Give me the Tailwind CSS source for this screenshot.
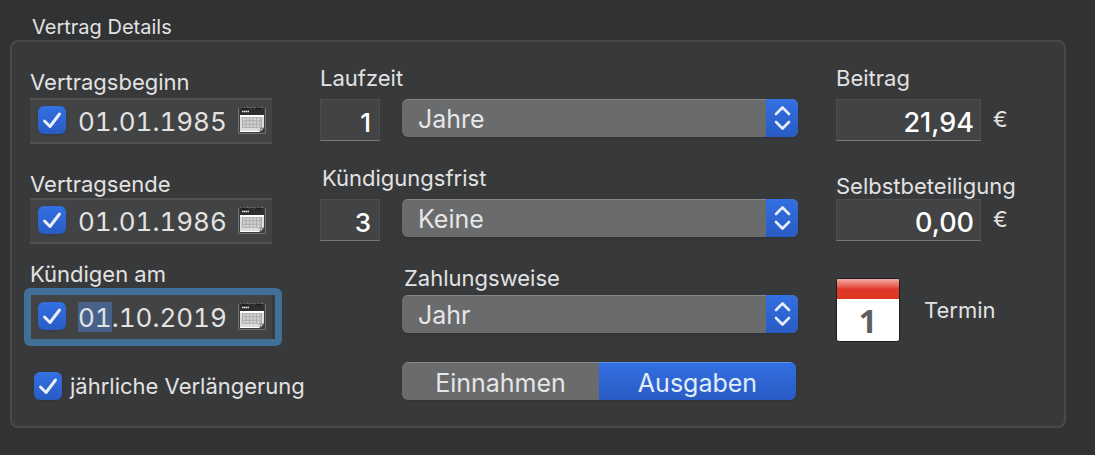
<!DOCTYPE html>
<html lang="de">
<head>
  <meta charset="UTF-8" />
  <meta name="viewport" content="width=device-width, initial-scale=1.0"/>
  <title>Vertrag Details</title>
  <script src="https://cdn.jsdelivr.net/npm/@tailwindcss/browser@4"></script>
</head>
<body class="min-h-screen bg-[#313234] font-['Inter','Liberation_Sans',sans-serif] text-[#e2e2e2]">

  <!-- shared icons -->
  <svg class="hidden">
    <symbol id="check" viewBox="0 0 28 28">
      <path d="M6.5 15 L12 20.5 L21.5 8" fill="none" stroke="#e8effb" stroke-width="3" stroke-linecap="round" stroke-linejoin="round"/>
    </symbol>
    <symbol id="updown" viewBox="0 0 32 38">
      <path d="M10 15 L16.5 8.500 L23 15 M10 23 L16.5 29.500 L23 23" fill="none" stroke="#e8effb" stroke-width="2.6" stroke-linecap="round" stroke-linejoin="round"/>
    </symbol>
    <symbol id="calendar" viewBox="0 0 28 30">
      <path d="M0.500 3 V28.500 H27.500 V3" fill="#3f4042" stroke="#6f7072" stroke-width="1"/>
      <rect x="2" y="2" width="24" height="8" fill="#2d2e30"/>
      <path d="M2 2.500 H26" stroke="#5b5c5e"/>
      <path d="M2 10 H26 V23 L22 27 H2 Z" fill="#dcdcdc"/>
      <path d="M2 10 H26 V12 H2 Z" fill="#ffffff"/>
      <path d="M2 26.500 H22" stroke="#ffffff"/>
      <rect x="4" y="12" width="20" height="11" fill="#acacac"/>
      <path d="M5 14 H23 M5 17.500 H23 M5 21 H23" stroke="#d2d2d2" stroke-width="2.500" stroke-dasharray="2.500 1"/>
      <path d="M22 27 L22.500 23.500 L26 23 Z" fill="#ffffff" stroke="#4c4c4c" stroke-width="0.800"/>
      <path d="M4 6.500 H11" stroke="#e8e8e8" stroke-width="1.300" stroke-dasharray="1.500 0.400"/>
      <path d="M5.500 4.500 V1 M8.500 4.500 V1 M19.500 4.500 V1 M22.500 4.500 V1" stroke="#18181a" stroke-width="2"/>
      <path d="M6 3 V1 M9 3 V1 M20 3 V1 M23 3 V1" stroke="#8a8b8d" stroke-width="1"/>
    </symbol>
  </svg>

  <fieldset aria-labelledby="title" class="pt-[15px] pr-[29px] pl-[10px]">
    <h1 id="title" class="pb-px pl-[22px] text-[20px] leading-6">Vertrag Details</h1>

    <div class="flex rounded-lg border-2 border-[#48494b] bg-[#38393b] pr-[45px] pb-[26px] pl-[18px] text-[22px] leading-6">

      <!-- dates -->
      <div class="w-[290px] shrink-0 pt-7">
        <label for="begin" class="block">Vertragsbeginn</label>
        <div class="mt-1 flex h-[46px] w-[242px] items-center border-y-2 border-[#515254] bg-[#424345] pr-[6px] pb-0.5 pl-2">
          <span class="relative size-7 shrink-0">
            <input type="checkbox" checked aria-label="Vertragsbeginn aktiv" class="block size-7 appearance-none rounded-md bg-linear-to-b from-[#3370e2] to-[#295bc3] shadow-sm">
            <svg class="pointer-events-none absolute inset-0 size-7"><use href="#check"/></svg>
          </span>
          <input id="begin" type="text" value="01.01.1985" class="ml-3 h-8 w-0 min-w-0 flex-1 bg-transparent pt-0.5 text-[26px] tabular-nums outline-none">
          <button type="button" aria-label="Kalender öffnen"><svg class="h-[30px] w-7"><use href="#calendar"/></svg></button>
        </div>

        <label for="end" class="mt-7 block">Vertragsende</label>
        <div class="mt-0.5 flex h-[46px] w-[242px] items-center border-y-2 border-[#515254] bg-[#424345] pr-[6px] pb-0.5 pl-2">
          <span class="relative size-7 shrink-0">
            <input type="checkbox" checked aria-label="Vertragsende aktiv" class="block size-7 appearance-none rounded-md bg-linear-to-b from-[#3370e2] to-[#295bc3] shadow-sm">
            <svg class="pointer-events-none absolute inset-0 size-7"><use href="#check"/></svg>
          </span>
          <input id="end" type="text" value="01.01.1986" class="ml-3 h-8 w-0 min-w-0 flex-1 bg-transparent pt-0.5 text-[26px] tabular-nums outline-none">
          <button type="button" aria-label="Kalender öffnen"><svg class="h-[30px] w-7"><use href="#calendar"/></svg></button>
        </div>

        <label for="cancel" class="mt-[18px] block">Kündigen am</label>
        <div class="-ml-[6px] mt-0.5 w-[258px] rounded-md border-[7px] border-[#426f98]">
          <div class="flex h-[44px] w-[241px] items-center bg-[#424345] pr-[6px] pb-0.5 pl-[7px]">
            <span class="relative size-7 shrink-0">
              <input type="checkbox" checked aria-label="Kündigen am aktiv" class="block size-7 appearance-none rounded-md bg-linear-to-b from-[#3370e2] to-[#295bc3] shadow-sm">
              <svg class="pointer-events-none absolute inset-0 size-7"><use href="#check"/></svg>
            </span>
            <input id="cancel" type="text" value="01.10.2019" class="ml-3 h-8 w-0 min-w-0 flex-1 bg-transparent pt-0.5 text-[26px] tabular-nums outline-none selection:bg-[#46628a] selection:text-[#e2e2e2]">
            <button type="button" aria-label="Kalender öffnen"><svg class="h-[30px] w-7"><use href="#calendar"/></svg></button>
          </div>
        </div>

        <div class="mt-[26px] flex items-center gap-2 pl-1">
          <span class="relative size-7 shrink-0">
            <input id="renew" type="checkbox" checked class="block size-7 appearance-none rounded-md bg-linear-to-b from-[#3370e2] to-[#295bc3] shadow-sm">
            <svg class="pointer-events-none absolute inset-0 size-7"><use href="#check"/></svg>
          </span>
          <label for="renew" class="whitespace-nowrap">jährliche Verlängerung</label>
        </div>
      </div>

      <!-- term and payment -->
      <div class="min-w-0 flex-1 pt-6">
        <label for="term" class="block">Laufzeit</label>
        <div class="mt-[9px] flex h-[42px] items-start gap-[22px]">
          <input id="term" type="text" value="1" class="h-[42px] w-[60px] border border-[#4c4d4f] border-b-[#77787a] bg-[#424345] pt-1 pr-2 text-right text-[26px] font-medium text-white outline-none">
          <div class="relative flex-1">
            <select aria-label="Einheit der Laufzeit" class="block h-[38px] w-full appearance-none rounded-md border-t border-[#858688] bg-[#6a6b6d] pl-4 text-[25px] leading-8 text-[#e6e6e6] shadow-sm">
              <option>Jahre</option>
              <option>Monate</option>
            </select>
            <svg class="pointer-events-none absolute top-0 right-0 h-[38px] w-8 rounded-r-md bg-linear-to-b from-[#3370e2] to-[#295bc3]"><use href="#updown"/></svg>
          </div>
        </div>

        <label for="notice" class="mt-[25px] block pl-0.5">Kündigungsfrist</label>
        <div class="mt-[9px] flex h-[42px] items-start gap-[22px]">
          <input id="notice" type="text" value="3" class="h-[42px] w-[60px] border border-[#4c4d4f] border-b-[#77787a] bg-[#424345] pt-1 pr-2 text-right text-[26px] font-medium text-white outline-none">
          <div class="relative flex-1">
            <select aria-label="Einheit der Kündigungsfrist" class="block h-[38px] w-full appearance-none rounded-md border-t border-[#858688] bg-[#6a6b6d] pl-4 text-[25px] leading-8 text-[#e6e6e6] shadow-sm">
              <option>Keine</option>
              <option>Monate</option>
            </select>
            <svg class="pointer-events-none absolute top-0 right-0 h-[38px] w-8 rounded-r-md bg-linear-to-b from-[#3370e2] to-[#295bc3]"><use href="#updown"/></svg>
          </div>
        </div>

        <div class="pt-[25px] pl-[82px]">
          <label for="payment" class="block pl-0.5">Zahlungsweise</label>
          <div class="relative mt-[5px]">
            <select id="payment" class="block h-[38px] w-full appearance-none rounded-md border-t border-[#858688] bg-[#6a6b6d] pl-4 text-[25px] leading-8 text-[#e6e6e6] shadow-sm">
              <option>Jahr</option>
              <option>Monat</option>
            </select>
            <svg class="pointer-events-none absolute top-0 right-0 h-[38px] w-8 rounded-r-md bg-linear-to-b from-[#3370e2] to-[#295bc3]"><use href="#updown"/></svg>
          </div>
          <div class="mt-[29px] mr-0.5 flex h-[38px] overflow-hidden rounded-md text-[25px] leading-8 shadow-sm">
            <button type="button" class="flex-1 border-t border-[#858688] bg-[#6a6b6d] pt-0.5 text-[#e6e6e6]">Einnahmen</button>
            <button type="button" aria-pressed="true" class="flex-1 border-t border-[#5c90ee] bg-linear-to-b from-[#3370e2] to-[#295bc3] pt-0.5 text-[#e4ecfa]">Ausgaben</button>
          </div>
        </div>
      </div>

      <!-- amounts -->
      <div class="ml-[38px] w-[183px] shrink-0 pt-6">
        <label for="amount" class="block">Beitrag</label>
        <div class="mt-[9px] flex h-[42px] gap-3">
          <input id="amount" type="text" value="21,94" class="h-[42px] w-[145px] border border-[#4c4d4f] border-b-[#77787a] bg-[#424345] pt-1 pr-[6px] text-right text-[27px] font-medium text-white outline-none">
          <span class="pt-2">€</span>
        </div>

        <label for="deductible" class="mt-[33px] block">Selbstbeteiligung</label>
        <div class="mt-px flex h-[42px] gap-3">
          <input id="deductible" type="text" value="0,00" class="h-[42px] w-[145px] border border-[#4c4d4f] border-b-[#77787a] bg-[#424345] pt-1 pr-[6px] text-right text-[27px] font-medium text-white outline-none">
          <span class="pt-2">€</span>
        </div>

        <button type="button" class="mt-[37px] flex items-center gap-6">
          <span class="flex size-16 flex-col overflow-hidden rounded-[3px] border border-[#1d1d1f] bg-white">
            <span class="h-5 bg-linear-to-b from-[#f2a9a6] via-[#e0382b] to-[#da3820]"></span>
            <span class="pt-1 text-center font-['Open_Sans',sans-serif] text-[32px] leading-9 font-bold text-[#5e5e5e]">1</span>
          </span>
          Termin
        </button>
      </div>
    </div>
  </fieldset>

  <script>
    // start editing at the day part of the cancellation date
    const cancelDate = document.getElementById("cancel");
    cancelDate.focus();
    cancelDate.setSelectionRange(0, 2);
  </script>
</body>
</html>
